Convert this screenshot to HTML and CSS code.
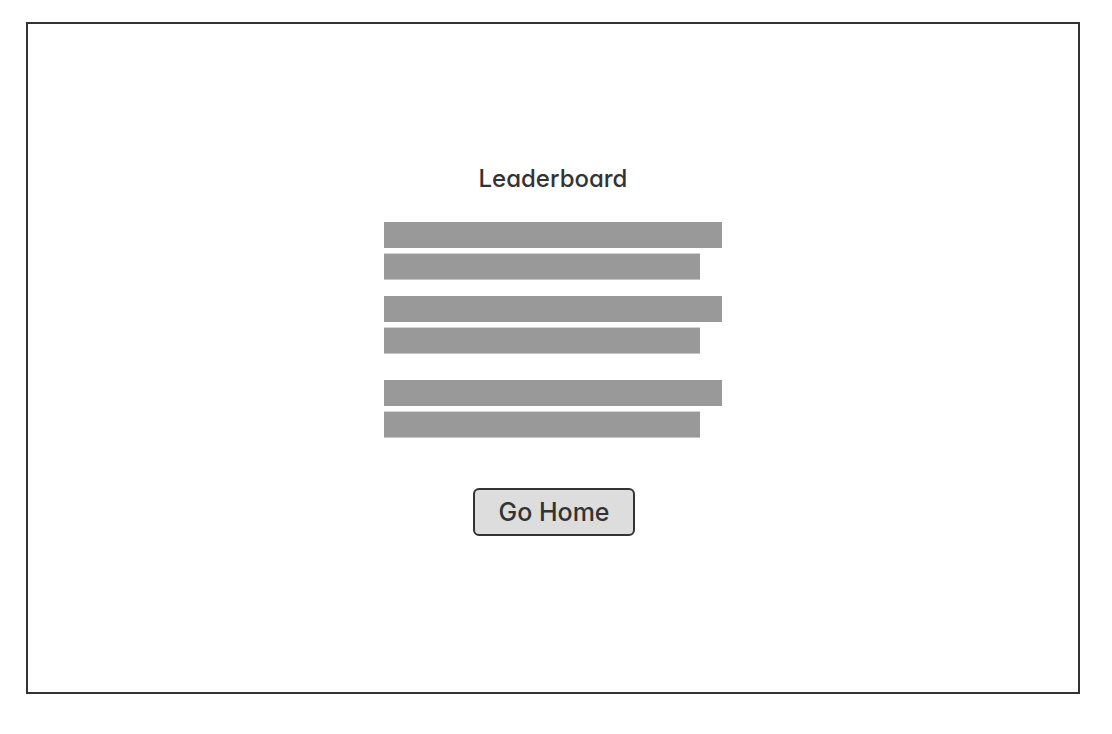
FILE: index.html
```html
<!DOCTYPE html>
<html>
<head>
<meta charset="utf-8">
<link rel="stylesheet" href="styles.css">
</head>
<body>
<div class="frame">
  <h1 class="title">Leaderboard</h1>
  <div class="board">
    <div class="entry">
      <div class="bar bar-long"></div>
      <div class="bar bar-short"></div>
    </div>
    <div class="entry">
      <div class="bar bar-long"></div>
      <div class="bar bar-short"></div>
    </div>
    <div class="entry">
      <div class="bar bar-long"></div>
      <div class="bar bar-short"></div>
    </div>
  </div>
  <button class="home-btn">Go Home</button>
</div>
</body>
</html>
```
FILE: styles.css
```css
html, body {
  margin: 0;
  padding: 0;
  background: #fff;
}
body {
  font-family: Inter, "Noto Sans", sans-serif;
  font-feature-settings: "cv11";
  color: #333;
}
.frame {
  box-sizing: border-box;
  width: 1054px;
  height: 672px;
  margin: 22px 0 0 26px;
  border: 2px solid #333;
  display: flex;
  flex-direction: column;
  align-items: center;
  padding-top: 140px;
}
.title {
  margin: 0;
  font-size: 24px;
  font-weight: 500;
  line-height: 30px;
  color: #333;
}
.board {
  width: 338px;
  margin-top: 28px;
  display: flex;
  flex-direction: column;
}
.entry {
  display: flex;
  flex-direction: column;
  gap: 5px;
}
.entry + .entry {
  margin-top: 16px;
}
.entry:last-child {
  margin-top: 26px;
}
.bar {
  background: #999;
}
.bar-long {
  width: 338px;
  height: 26px;
}
.bar-short {
  width: 316px;
  height: 25px;
  border-top: 1px solid #d4d4d4;
  border-bottom: 1px solid #c4c4c4;
}
.home-btn {
  box-sizing: border-box;
  margin-top: 50px;
  margin-left: 2px;
  width: 162px;
  height: 48px;
  border: 2px solid #333;
  border-radius: 6px;
  background: #ddd;
  font-family: Inter, "Noto Sans", sans-serif;
  font-feature-settings: "cv11";
  font-size: 25px;
  font-weight: 500;
  color: #333;
  padding: 0;
}
```
